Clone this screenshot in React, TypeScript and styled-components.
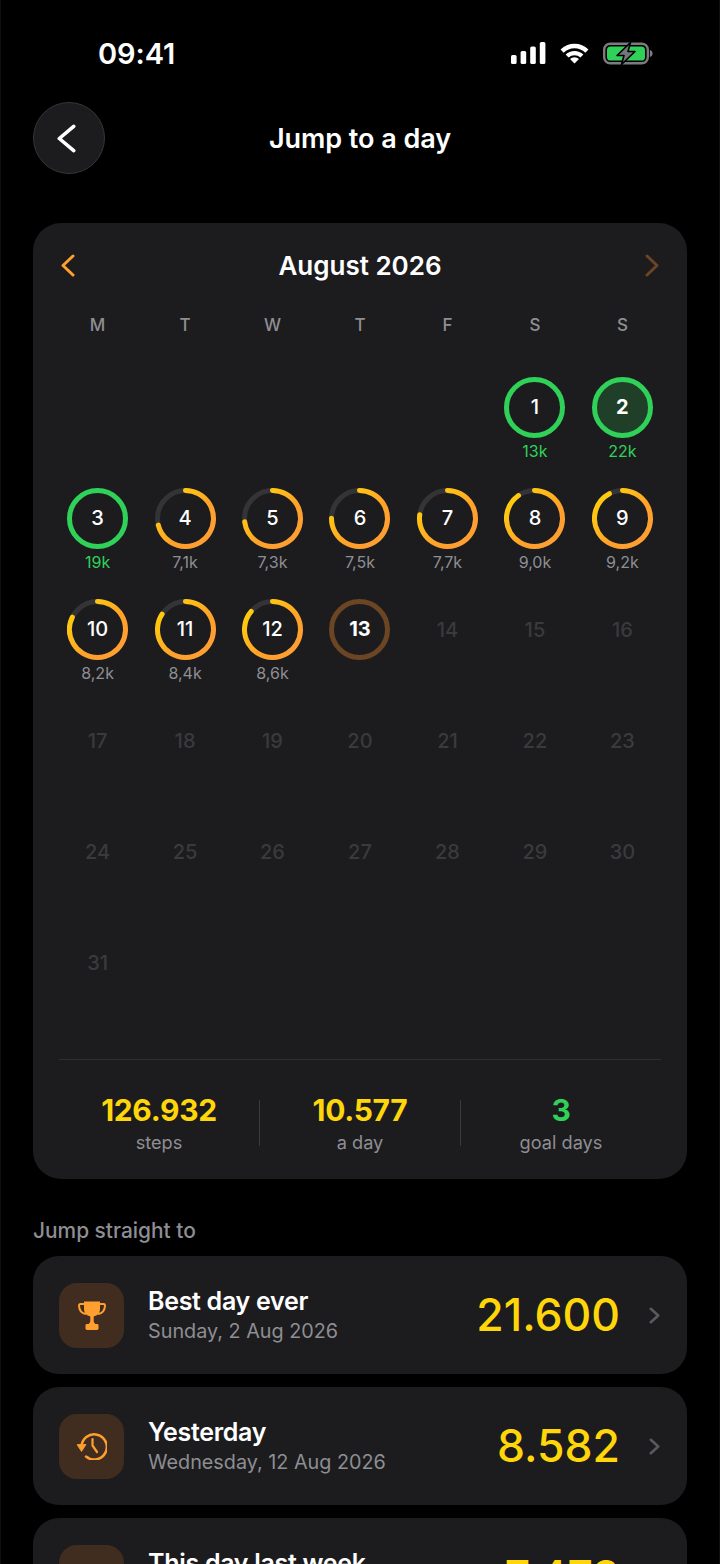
import { useId } from 'react';
import styled, { createGlobalStyle } from 'styled-components';

const GlobalStyle = createGlobalStyle`
	html, body {
		margin: 0;
		background: #000;
	}
	* {
		box-sizing: border-box;
	}
`;

const Page = styled.div`
	width: 720px;
	height: 1564px;
	overflow: hidden;
	padding: 0 32px;
	background: #000;
	border: solid #0e0e0e;
	border-width: 0 1px;
	color: #fff;
	font-family: Inter, 'Noto Sans', sans-serif;
`;

const StatusBar = styled.div`
	height: 102px;
	padding: 4px 34px 0 65px;
	display: flex;
	align-items: center;
	justify-content: space-between;
`;

const Time = styled.div`
	font-size: 29px;
	font-weight: 600;
	letter-spacing: -0.1px;
`;

const StatusIcons = styled.div`
	display: flex;
	align-items: center;
	gap: 13px;
`;

const Header = styled.div`
	display: grid;
	grid-template-columns: 72px 1fr 72px;
	align-items: center;
	margin-bottom: 49px;
`;

const BackButton = styled.div`
	width: 72px;
	height: 72px;
	border-radius: 50%;
	background: #1c1c1e;
	border: 1px solid #363638;
	display: flex;
	align-items: center;
	justify-content: center;
	padding-right: 5px;
`;

const Title = styled.div`
	text-align: center;
	font-size: 27px;
	font-weight: 600;
	letter-spacing: -0.05px;
`;

const Card = styled.div`
	background: #1c1c1e;
	border-radius: 28px;
	padding: 22px 26px 25px;
`;

const MonthRow = styled.div`
	height: 40px;
	display: flex;
	align-items: center;
	justify-content: space-between;
	padding: 0 2px;
`;

const MonthName = styled.div`
	font-size: 26px;
	font-weight: 600;
`;

const WeekRow = styled.div`
	margin-top: 30px;
	display: grid;
	grid-template-columns: repeat(7, 1fr);
	column-gap: 10.33px;
`;

const WeekDay = styled.div`
	height: 20px;
	line-height: 20px;
	text-align: center;
	font-size: 17px;
	font-weight: 500;
	color: #8e8e93;
`;

const DayGrid = styled.div`
	margin-top: 42px;
	display: grid;
	grid-template-columns: repeat(7, 1fr);
	grid-auto-rows: 101px;
	gap: 10px 10.33px;
`;

const DayCell = styled.div`
	display: flex;
	flex-direction: column;
	align-items: center;
`;

const RingBox = styled.div`
	position: relative;
	width: 61px;
	height: 61px;
	display: flex;
	align-items: center;
	justify-content: center;
	flex: none;
`;

const RingSvg = styled.svg`
	position: absolute;
	inset: 0;
`;

const DayNumber = styled.span<{ $strong?: boolean; $future?: boolean }>`
	position: relative;
	top: ${(p) => (p.$future ? '0' : '-0.5px')};
	font-size: 20px;
	font-weight: ${(p) => (p.$strong ? 700 : 500)};
	color: ${(p) => (p.$future ? '#3a3a3c' : '#fff')};
`;

const DaySteps = styled.div<{ $goal?: boolean }>`
	margin-top: 3px;
	line-height: 20px;
	font-size: 16px;
	color: ${(p) => (p.$goal ? '#30d158' : '#8e8e93')};
`;

const Divider = styled.div`
	margin-top: 26px;
	height: 1px;
	background: #2e2e30;
`;

const Stats = styled.div`
	padding-top: 32px;
	display: flex;
	align-items: center;
`;

const Stat = styled.div`
	flex: 1;
	text-align: center;
`;

const StatValue = styled.div<{ $goal?: boolean }>`
	line-height: 36px;
	font-size: 30px;
	font-weight: 700;
	letter-spacing: -0.3px;
	color: ${(p) => (p.$goal ? '#30d158' : '#ffd60a')};
`;

const StatLabel = styled.div`
	margin-top: 2px;
	line-height: 24px;
	font-size: 18.2px;
	color: #8e8e93;
`;

const StatRule = styled.div`
	width: 1px;
	height: 46px;
	background: #3a3a3c;
`;

const SectionLabel = styled.div`
	margin: 40px 0 13px;
	line-height: 24px;
	font-size: 20.9px;
	font-weight: 500;
	color: #8e8e93;
`;

const JumpList = styled.div`
	display: flex;
	flex-direction: column;
	gap: 13px;
`;

const JumpRow = styled.div`
	flex: none;
	height: 118px;
	background: #1c1c1e;
	border-radius: 26px;
	padding: 0 27px 0 26px;
	display: flex;
	align-items: center;
`;

const JumpIcon = styled.div`
	flex: none;
	width: 65px;
	height: 65px;
	border-radius: 18px;
	background: #402d20;
	display: flex;
	align-items: center;
	justify-content: center;
`;

const JumpText = styled.div`
	flex: 1;
	margin-left: 24px;
`;

const JumpTitle = styled.div`
	line-height: 32px;
	font-size: 25px;
	font-weight: 600;
	letter-spacing: -0.3px;
`;

const JumpDate = styled.div`
	line-height: 28px;
	font-size: 19.8px;
	color: #8e8e93;
`;

const JumpValue = styled.div`
	font-size: 44.5px;
	font-weight: 500;
	color: #ffd60a;
	margin-right: 29px;
`;

const Chevron = ({ dir, color, w, h, stroke }: { dir: 'left' | 'right'; color: string; w: number; h: number; stroke: number }) => {
	const d = stroke / 2 + 0.5;
	const points =
		dir === 'left'
			? `${w - d},${d} ${d},${h / 2} ${w - d},${h - d}`
			: `${d},${d} ${w - d},${h / 2} ${d},${h - d}`;
	return (
		<svg width={w} height={h} viewBox={`0 0 ${w} ${h}`} fill="none">
			<polyline points={points} stroke={color} strokeWidth={stroke} strokeLinecap="round" strokeLinejoin="round" />
		</svg>
	);
};

const SignalIcon = () => (
	<svg width="35" height="22" viewBox="0 0 35 22" fill="#fff">
		<rect x="0" y="13" width="5.6" height="9" rx="1.6" />
		<rect x="9.6" y="9" width="5.6" height="13" rx="1.6" />
		<rect x="19.2" y="4.5" width="5.6" height="17.5" rx="1.6" />
		<rect x="28.8" y="0" width="5.6" height="22" rx="1.6" />
	</svg>
);

const WifiIcon = () => (
	<svg width="31" height="22" viewBox="0 0 31 22" fill="none">
		<path d="M3.1 9.1A17.5 17.5 0 0 1 27.9 9.1" stroke="#fff" strokeWidth="4.4" />
		<path d="M8.1 14.1A10.5 10.5 0 0 1 22.9 14.1" stroke="#fff" strokeWidth="4.2" />
		<path d="M15.5 21.5L11 17A6.4 6.4 0 0 1 20 17Z" fill="#fff" />
	</svg>
);

const BatteryIcon = () => (
	<svg width="50" height="25" viewBox="0 0 50 25" fill="none">
		<rect x="1.2" y="2.7" width="43.6" height="19.6" rx="6" stroke="#7c7c80" strokeWidth="2.4" />
		<rect x="4" y="5.5" width="38" height="14" rx="3.6" fill="#30d158" />
		<path d="M46.8 9v7c1.8-.4 2.8-1.8 2.8-3.5S48.6 9.4 46.8 9z" fill="#7c7c80" />
		<path d="M27.5 1.5L14 14.5H21L18.5 23.5L32 10.5H25Z" fill="#76767a" stroke="#000" strokeWidth="1.6" strokeLinejoin="round" />
	</svg>
);

const TrophyIcon = () => (
	<svg width="28" height="29" viewBox="0 0 28 29" fill="#ff9f2f">
		<path d="M6 .5H22V8C22 13 18 15.5 14 15.5S6 13 6 8Z" />
		<path d="M6 3H2.4C1.6 3 1 3.6 1 4.4C1 9 3.5 12 8 13M22 3H25.6C26.4 3 27 3.6 27 4.4C27 9 24.5 12 20 13" fill="none" stroke="#ff9f2f" strokeWidth="2" />
		<path d="M12.3 15H15.7V20C15.7 21.6 16.8 22.8 18.5 23.5H9.5C11.2 22.8 12.3 21.6 12.3 20Z" />
		<rect x="7.5" y="23" width="13" height="6" rx="1.4" />
	</svg>
);

const ClockIcon = () => (
	<svg width="30" height="28" viewBox="0 0 30 28" fill="none">
		<path d="M4.6 15A12.6 12.6 0 1 1 9 24.5" stroke="#ff9f2f" strokeWidth="2.5" strokeLinecap="round" />
		<path d="M0 12.5H9L4.5 19.5Z" fill="#ff9f2f" stroke="#ff9f2f" strokeWidth="0.8" strokeLinejoin="round" />
		<path d="M15.5 7V13.5L20 20" stroke="#ff9f2f" strokeWidth="2.2" strokeLinecap="round" strokeLinejoin="round" />
	</svg>
);

const CalendarIcon = () => (
	<svg width="28" height="28" viewBox="0 0 28 28" fill="#ff9f2f">
		<path d="M5 1H23C25.2 1 27 2.8 27 5V8H1V5C1 2.8 2.8 1 5 1Z" />
		<path d="M1 10H27V23C27 25.2 25.2 27 23 27H5C2.8 27 1 25.2 1 23Z" opacity="0.85" />
	</svg>
);

const RING_SIZE = 61;
const RING_R = 28;

const Ring = ({ progress, color, fill }: { progress: number; color?: string; fill?: string }) => {
	const id = useId();
	const c = RING_SIZE / 2;
	const len = 2 * Math.PI * RING_R;
	return (
		<RingSvg width={RING_SIZE} height={RING_SIZE} viewBox={`0 0 ${RING_SIZE} ${RING_SIZE}`} fill="none">
			<defs>
				<linearGradient id={id} gradientUnits="userSpaceOnUse" x1="6" y1="6" x2="48" y2="48">
					<stop offset="0" stopColor="#ffd00a" />
					<stop offset="0.3" stopColor="#ffc015" />
					<stop offset="0.7" stopColor="#ffa228" />
					<stop offset="1" stopColor="#ff9f2f" />
				</linearGradient>
			</defs>
			{color ? (
				<circle cx={c} cy={c} r={RING_R} stroke={color} strokeWidth="5" fill={fill ?? 'none'} />
			) : (
				<>
					<circle cx={c} cy={c} r={RING_R} stroke="#343436" strokeWidth="5" />
					{/* arc drawn as a path so the gradient is not rotated with it */}
					<path
						d={`M${c} ${c - RING_R}A${RING_R} ${RING_R} 0 1 1 ${c - 0.01} ${c - RING_R}`}
						stroke={`url(#${id})`}
						strokeWidth="5"
						strokeLinecap="round"
						strokeDasharray={`${len * progress} ${len}`}
					/>
				</>
			)}
		</RingSvg>
	);
};

const GREEN = '#30d158';

type Day = {
	n: number;
	steps?: string;
	progress?: number;
	goal?: boolean;
	best?: boolean;
	today?: boolean;
};

const days: Day[] = [
	{ n: 1, steps: '13k', goal: true },
	{ n: 2, steps: '22k', goal: true, best: true },
	{ n: 3, steps: '19k', goal: true },
	{ n: 4, steps: '7,1k', progress: 0.71 },
	{ n: 5, steps: '7,3k', progress: 0.73 },
	{ n: 6, steps: '7,5k', progress: 0.75 },
	{ n: 7, steps: '7,7k', progress: 0.77 },
	{ n: 8, steps: '9,0k', progress: 0.9 },
	{ n: 9, steps: '9,2k', progress: 0.92 },
	{ n: 10, steps: '8,2k', progress: 0.82 },
	{ n: 11, steps: '8,4k', progress: 0.84 },
	{ n: 12, steps: '8,6k', progress: 0.86 },
	{ n: 13, today: true },
	...Array.from({ length: 18 }, (_, i) => ({ n: i + 14 })),
];

const DayItem = ({ day }: { day: Day }) => {
	const future = day.n > 13;
	return (
		<DayCell>
			<RingBox>
				{day.goal && <Ring progress={1} color={GREEN} fill={day.best ? '#1f3f28' : undefined} />}
				{day.today && <Ring progress={0} color="#6b4524" />}
				{day.progress !== undefined && <Ring progress={day.progress} />}
				<DayNumber $strong={day.best || day.today} $future={future}>
					{day.n}
				</DayNumber>
			</RingBox>
			{day.steps && <DaySteps $goal={day.goal}>{day.steps}</DaySteps>}
		</DayCell>
	);
};

const jumps = [
	{ title: 'Best day ever', date: 'Sunday, 2 Aug 2026', value: '21.600', icon: <TrophyIcon /> },
	{ title: 'Yesterday', date: 'Wednesday, 12 Aug 2026', value: '8.582', icon: <ClockIcon /> },
	{ title: 'This day last week', date: 'Thursday, 6 Aug 2026', value: '7.473', icon: <CalendarIcon /> },
];

export default function App() {
	return (
		<Page>
			<GlobalStyle />
			<StatusBar>
				<Time>09:41</Time>
				<StatusIcons>
					<SignalIcon />
					<WifiIcon />
					<BatteryIcon />
				</StatusIcons>
			</StatusBar>
			<Header>
				<BackButton>
					<Chevron dir="left" color="#fff" w={19} h={29} stroke={3.6} />
				</BackButton>
				<Title>Jump to a day</Title>
			</Header>
			<Card>
				<MonthRow>
					<Chevron dir="left" color="#ff9f2f" w={14} h={23} stroke={3} />
					<MonthName>August 2026</MonthName>
					<Chevron dir="right" color="#6b4524" w={14} h={23} stroke={3} />
				</MonthRow>
				<WeekRow>
					{['M', 'T', 'W', 'T', 'F', 'S', 'S'].map((d, i) => (
						<WeekDay key={i}>{d}</WeekDay>
					))}
				</WeekRow>
				<DayGrid>
					{Array.from({ length: 5 }, (_, i) => (
						<div key={i} />
					))}
					{days.map((day) => (
						<DayItem key={day.n} day={day} />
					))}
				</DayGrid>
				<Divider />
				<Stats>
					<Stat>
						<StatValue>126.932</StatValue>
						<StatLabel>steps</StatLabel>
					</Stat>
					<StatRule />
					<Stat>
						<StatValue>10.577</StatValue>
						<StatLabel>a day</StatLabel>
					</Stat>
					<StatRule />
					<Stat>
						<StatValue $goal>3</StatValue>
						<StatLabel>goal days</StatLabel>
					</Stat>
				</Stats>
			</Card>
			<SectionLabel>Jump straight to</SectionLabel>
			<JumpList>
				{jumps.map((j) => (
					<JumpRow key={j.title}>
						<JumpIcon>{j.icon}</JumpIcon>
						<JumpText>
							<JumpTitle>{j.title}</JumpTitle>
							<JumpDate>{j.date}</JumpDate>
						</JumpText>
						<JumpValue>{j.value}</JumpValue>
						<Chevron dir="right" color="#5a5a5e" w={11} h={17} stroke={2.6} />
					</JumpRow>
				))}
			</JumpList>
		</Page>
	);
}
